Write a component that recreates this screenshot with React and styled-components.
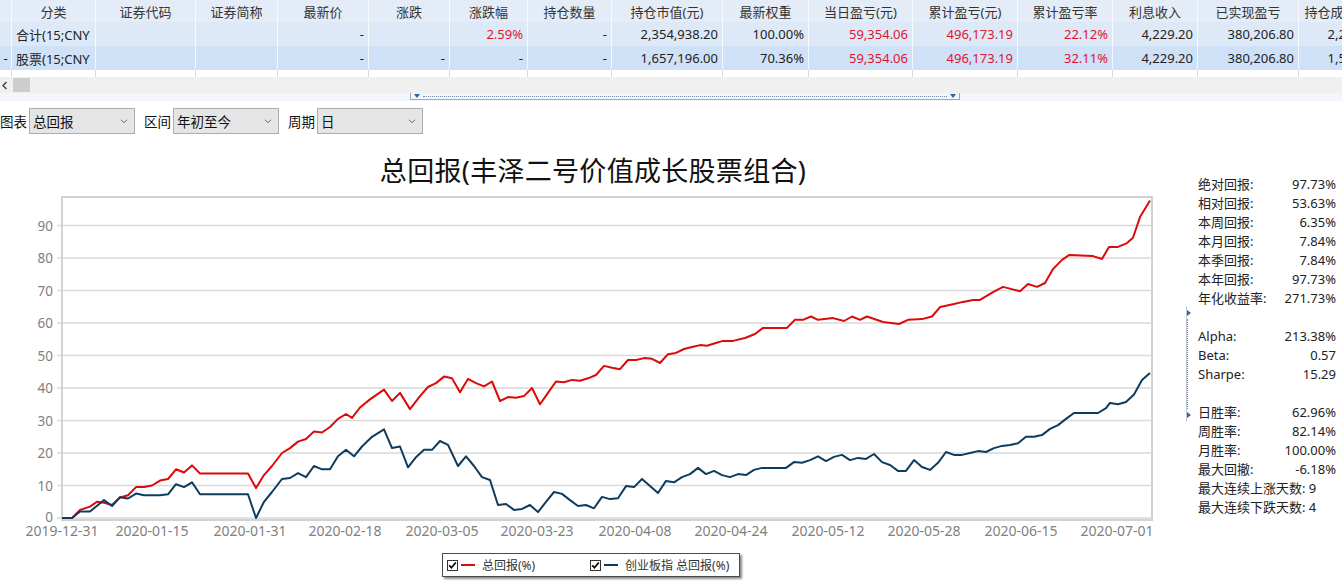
import React from 'react';
import styled, { createGlobalStyle } from 'styled-components';

const GlobalStyle = createGlobalStyle`
  html, body {
    margin: 0;
    padding: 0;
    background: #fff;
  }
  body {
    font-family: "Noto Sans", "Noto Sans CJK SC", sans-serif;
    color: #222;
    overflow: hidden;
  }
`;

const Page = styled.div`
  width: 1342px;
  height: 584px;
  display: flex;
  flex-direction: column;
  overflow: hidden;
`;

/* ---------- grid ---------- */

const GridWrap = styled.div`
  height: 77px;
  overflow: hidden;
  flex-shrink: 0;
`;

const Row = styled.div`
  display: flex;
  width: max-content;
  height: ${p => (p.$header ? 22 : 24)}px;
  background: ${p => p.$bg};
  white-space: nowrap;
`;

const Cell = styled.div`
  flex: 0 0 ${p => p.$w}px;
  box-sizing: border-box;
  padding: 0 4px;
  display: flex;
  align-items: center;
  justify-content: ${p =>
    p.$align === 'left' ? 'flex-start' : p.$align === 'center' ? 'center' : 'flex-end'};
  font-size: 13px;
  color: ${p => (p.$red ? '#e0142c' : p.$header ? '#333' : '#222')};
  border-right: 1px solid ${p => (p.$plain ? '#d9d9d9' : 'rgba(255,255,255,0.75)')};
  overflow: hidden;
`;

const HScroll = styled.div`
  height: 16px;
  background: #f0f0f0;
  display: flex;
  align-items: center;
  gap: 4px;
  padding-left: 1px;
  flex-shrink: 0;
`;

const Thumb = styled.div`
  width: 17px;
  height: 14px;
  background: #cdcdcd;
`;

const HSplit = styled.div`
  height: 8px;
  background: #f3f6fa;
  display: flex;
  align-items: flex-start;
  padding-left: 410px;
  flex-shrink: 0;
`;

const HHandle = styled.div`
  width: 550px;
  height: 7px;
  box-sizing: border-box;
  border: 1px solid #9aa8ba;
  border-top: none;
  display: flex;
  align-items: center;
  gap: 3px;
  padding: 0 3px;
`;

const DownTri = styled.div`
  width: 0;
  height: 0;
  border-left: 3px solid transparent;
  border-right: 3px solid transparent;
  border-top: 4px solid #2d62a8;
`;

const DotLine = styled.div`
  flex: 1;
  border-top: 1px dotted #6c86aa;
`;

/* ---------- toolbar ---------- */

const Toolbar = styled.div`
  height: 40px;
  display: flex;
  align-items: center;
  flex-shrink: 0;
`;

const Field = styled.div`
  display: flex;
  align-items: center;
  gap: 2px;
  margin-right: 9px;
`;

const Label = styled.span`
  font-size: 13.5px;
  color: #111;
`;

const Select = styled.div`
  width: 106px;
  height: 26px;
  box-sizing: border-box;
  background: #e5e5e5;
  border: 1px solid #adadad;
  display: flex;
  align-items: center;
  justify-content: space-between;
  padding: 0 6px 0 3px;
  font-size: 13.5px;
  color: #111;
`;

/* ---------- body ---------- */

const Main = styled.div`
  flex: 1;
  display: flex;
  min-height: 0;
`;

const ChartPane = styled.div`
  width: 1186px;
  flex-shrink: 0;
  display: flex;
  flex-direction: column;
  align-items: center;
`;

const Title = styled.div`
  margin-top: 14px;
  font-size: 27px;
  line-height: 32px;
  color: #111;
  letter-spacing: 0.3px;
`;

const ChartSvg = styled.svg`
  display: block;
  align-self: flex-start;
  margin-top: 3px;
`;

const Legend = styled.div`
  margin-top: 8px;
  margin-left: -4px;
  width: 298px;
  height: 24px;
  box-sizing: border-box;
  border: 1px solid #4a4a4a;
  box-shadow: 2px 2px 2px rgba(0, 0, 0, 0.45);
  display: flex;
  align-items: center;
  padding-left: 4px;
  background: #fff;
`;

const LegendItem = styled.div`
  width: 143px;
  display: flex;
  align-items: center;
  font-size: 12px;
  color: #333;
`;

const Check = styled.span`
  width: 11px;
  height: 11px;
  box-sizing: border-box;
  border: 1px solid #333;
  display: inline-flex;
  align-items: center;
  justify-content: center;
  margin-right: 3px;
`;

const Swatch = styled.span`
  width: 14px;
  height: 2px;
  background: ${p => p.$color};
  margin-right: 7px;
`;

const VSplit = styled.div`
  align-self: center;
  width: 4px;
  height: 116px;
  box-sizing: border-box;
  border-left: 1px solid #c3ccd8;
  display: flex;
  flex-direction: column;
  align-items: flex-start;
  justify-content: space-between;
  padding: 4px 0;
  margin-top: 2px;
`;

const RightTri = styled.div`
  width: 0;
  height: 0;
  border-top: 3px solid transparent;
  border-bottom: 3px solid transparent;
  border-left: 4px solid #2d62a8;
`;

const VDots = styled.div`
  flex: 1;
  margin: 3px 0;
  border-left: 1px dotted #6c86aa;
`;

const Stats = styled.div`
  flex: 1;
  padding: 33px 6px 0 8px;
  display: flex;
  flex-direction: column;
`;

const StatRow = styled.div`
  height: 19px;
  display: flex;
  align-items: center;
  justify-content: space-between;
  font-size: 13px;
  color: #222;
  white-space: nowrap;
`;

/* ---------- data ---------- */

const columns = [
  { title: '', w: 12, align: 'center' },
  { title: '分类', w: 84, align: 'left' },
  { title: '证券代码', w: 100, align: 'left' },
  { title: '证券简称', w: 82, align: 'left' },
  { title: '最新价', w: 91 },
  { title: '涨跌', w: 81 },
  { title: '涨跌幅', w: 78 },
  { title: '持仓数量', w: 84 },
  { title: '持仓市值(元)', w: 111 },
  { title: '最新权重', w: 86 },
  { title: '当日盈亏(元)', w: 104 },
  { title: '累计盈亏(元)', w: 105 },
  { title: '累计盈亏率', w: 95 },
  { title: '利息收入', w: 85 },
  { title: '已实现盈亏', w: 101 },
  { title: '持仓成本价格(元)', w: 111 },
];

const R = s => ({ v: s, red: true });

const rows = [
  {
    bg: '#dee9f7',
    cells: ['', '合计(15;CNY', '', '', '-', '', R('2.59%'), '-', '2,354,938.20', '100.00%',
      R('59,354.06'), R('496,173.19'), R('22.12%'), '4,229.20', '380,206.80', '2,259,731.40'],
  },
  {
    bg: '#cfe1f7',
    cells: ['-', '股票(15;CNY', '', '', '-', '-', '-', '-', '1,657,196.00', '70.36%',
      R('59,354.06'), R('496,173.19'), R('32.11%'), '4,229.20', '380,206.80', '1,562,018.40'],
  },
  {
    bg: '#fff',
    plain: true,
    cells: ['', '', '', '', '', '', '', '', '', '', '', '', '', '', '', ''],
  },
];

const red = [
  [62, 0], [72, 0], [80, 2.5], [90, 3.5], [97, 5], [104, 4.7], [112, 4], [120, 6.3], [128, 7],
  [136, 9.5], [144, 9.5], [152, 10], [160, 11.5], [168, 12], [176, 15], [184, 14], [192, 16.2],
  [200, 13.7], [248, 13.7], [256, 9.2], [264, 13.2], [272, 16], [282, 20], [290, 21.5],
  [298, 23.5], [306, 24.3], [314, 26.6], [322, 26.3], [330, 28], [338, 30.5], [346, 32],
  [352, 30.8], [360, 34], [370, 36.5], [384, 39.5], [392, 36], [400, 38.5], [410, 33.5],
  [420, 37.5], [428, 40.3], [436, 41.5], [444, 43.5], [452, 43], [460, 38.7], [468, 42.8],
  [476, 41.5], [484, 40.5], [492, 42], [500, 36], [508, 37.2], [516, 37], [524, 37.5],
  [532, 40], [540, 35], [548, 38.5], [556, 42], [564, 41.8], [572, 42.5], [580, 42.2],
  [588, 43], [596, 44], [604, 46.8], [612, 46.2], [620, 45.8], [628, 48.6], [636, 48.6],
  [644, 49.2], [652, 49], [660, 47.7], [668, 50.4], [676, 50.8], [684, 52], [692, 52.6],
  [700, 53.2], [707, 53], [715, 53.8], [723, 54.5], [733, 54.5], [745, 55.4], [755, 56.6],
  [763, 58.5], [787, 58.5], [795, 61], [803, 61], [811, 62], [818, 61], [833, 61.5],
  [844, 60.6], [852, 62], [860, 61], [867, 62], [883, 60.3], [899, 59.7], [908, 61],
  [922, 61.2], [932, 62], [940, 64.9], [953, 65.8], [963, 66.5], [973, 67.1], [980, 67.1],
  [993, 69.5], [1003, 71.1], [1020, 69.8], [1028, 72], [1037, 71.1], [1045, 72.3],
  [1053, 76.6], [1062, 79.4], [1069, 80.9], [1093, 80.6], [1102, 79.7], [1109, 83.4],
  [1118, 83.4], [1127, 84.6], [1133, 86.2], [1140, 92.6], [1150, 97.73],
];

const blue = [
  [62, 0], [72, 0], [80, 2], [90, 2], [98, 4], [104, 5.5], [112, 3.7], [120, 6.4], [128, 6],
  [136, 7.5], [144, 7], [160, 7], [168, 7.3], [176, 10.4], [184, 9.5], [192, 11], [200, 7.3],
  [248, 7.3], [256, 0], [264, 5], [272, 8], [282, 12], [290, 12.3], [298, 13.8], [306, 12.6],
  [314, 16], [322, 15], [330, 15], [338, 19], [346, 21], [354, 19], [362, 22], [372, 25],
  [384, 27.3], [392, 21.5], [400, 22], [408, 15.6], [416, 18.7], [424, 21], [432, 21],
  [440, 23.7], [448, 22.5], [458, 16], [466, 19], [474, 16], [482, 12.6], [490, 11.7],
  [498, 4], [506, 4.3], [514, 2.5], [522, 2.8], [530, 4], [538, 1.8], [546, 5], [554, 8],
  [562, 7.4], [570, 5.5], [578, 3.7], [586, 4], [594, 3], [602, 6.5], [610, 5.8], [618, 6.1],
  [626, 9.8], [634, 9.5], [642, 12], [650, 9.8], [658, 7.7], [666, 11.4], [674, 11],
  [682, 12.6], [690, 13.5], [698, 15.4], [706, 13.5], [714, 14.5], [722, 13.2], [730, 12.6],
  [738, 13.5], [746, 13.2], [754, 14.8], [762, 15.4], [786, 15.4], [794, 17.2], [802, 17],
  [810, 17.8], [818, 19], [826, 17.5], [834, 18.8], [842, 19.4], [850, 17.8], [858, 18.5],
  [866, 18.2], [874, 19.7], [882, 17.2], [890, 16.3], [898, 14.5], [906, 14.5], [914, 17.8],
  [922, 15.7], [930, 14.8], [938, 17], [946, 20.3], [954, 19.4], [962, 19.4], [970, 20],
  [978, 20.6], [986, 20.3], [994, 21.5], [1002, 22.2], [1010, 22.5], [1018, 23], [1026, 25],
  [1034, 25], [1042, 25.5], [1050, 27.4], [1058, 28.6], [1066, 30.5], [1074, 32.3],
  [1098, 32.3], [1106, 33.8], [1110, 35.4], [1118, 35], [1126, 35.7], [1134, 38],
  [1142, 42.5], [1150, 44.6],
];

const xTicks = [
  [62, '2019-12-31'], [152, '2020-01-15'], [250, '2020-01-31'], [345, '2020-02-18'],
  [442, '2020-03-05'], [537, '2020-03-23'], [635, '2020-04-08'], [731, '2020-04-24'],
  [828, '2020-05-12'], [924, '2020-05-28'], [1021, '2020-06-15'], [1117, '2020-07-01'],
];

const stats = [
  ['绝对回报:', '97.73%'], ['相对回报:', '53.63%'], ['本周回报:', '6.35%'], ['本月回报:', '7.84%'],
  ['本季回报:', '7.84%'], ['本年回报:', '97.73%'], ['年化收益率:', '271.73%'], null,
  ['Alpha:', '213.38%'], ['Beta:', '0.57'], ['Sharpe:', '15.29'], null,
  ['日胜率:', '62.96%'], ['周胜率:', '82.14%'], ['月胜率:', '100.00%'], ['最大回撤:', '-6.18%'],
  ['最大连续上涨天数: 9'], ['最大连续下跌天数: 4'],
];

/* ---------- chart ---------- */

const PLOT = { left: 62, right: 1152, top: 7, bottom: 330, zero: 328, unit: 3.25 };
const yOf = v => PLOT.zero - v * PLOT.unit;
const toPoints = data => data.map(([x, v]) => `${x},${yOf(v).toFixed(1)}`).join(' ');

const ReturnChart = () => (
  <ChartSvg width="1186" height="355" viewBox="0 0 1186 355">
    {[0, 10, 20, 30, 40, 50, 60, 70, 80, 90].map(v => (
      <g key={v}>
        <line x1="57" x2={PLOT.right} y1={yOf(v)} y2={yOf(v)} stroke="#d9d9d9" strokeWidth="1.6" />
        <text
          x="53"
          y={yOf(v) + (v === 0 ? 4 : 5)}
          textAnchor="end"
          fontSize="13.5"
          fill="#7f7f7f"
          fontFamily='"Noto Sans", sans-serif'
        >
          {v}
        </text>
      </g>
    ))}
    <rect
      x={PLOT.left}
      y={PLOT.top}
      width={PLOT.right - PLOT.left}
      height={PLOT.bottom - PLOT.top}
      fill="none"
      stroke="#d2d2d2"
      strokeWidth="2"
    />
    {xTicks.map(([x, label]) => (
      <text
        key={label}
        x={x}
        y="346"
        textAnchor="middle"
        fontSize="14"
        fill="#7f7f7f"
        fontFamily='"Noto Sans", sans-serif'
      >
        {label}
      </text>
    ))}
    <polyline points={toPoints(red)} fill="none" stroke="#dc0a0a" strokeWidth="2" strokeLinejoin="round" />
    <polyline points={toPoints(blue)} fill="none" stroke="#0d3c5f" strokeWidth="2" strokeLinejoin="round" />
  </ChartSvg>
);

const Chevron = () => (
  <svg width="8" height="5" viewBox="0 0 8 5">
    <polyline points="1,0.8 4,3.8 7,0.8" fill="none" stroke="#666" strokeWidth="1" />
  </svg>
);

const Tick = () => (
  <svg width="9" height="9" viewBox="0 0 9 9">
    <polyline points="1.2,4.3 3.4,6.8 7.8,1.5" fill="none" stroke="#000" strokeWidth="1.7" />
  </svg>
);

const App = () => (
  <Page>
    <GlobalStyle />
    <GridWrap>
      <Row $header $bg="#e4ecf7">
        {columns.map((c, i) => (
          <Cell key={i} $w={c.w} $align="center" $header>
            {c.title}
          </Cell>
        ))}
      </Row>
      {rows.map((r, ri) => (
        <Row key={ri} $bg={r.bg}>
          {r.cells.map((cell, i) => {
            const val = typeof cell === 'string' ? cell : cell.v;
            return (
              <Cell key={i} $w={columns[i].w} $align={columns[i].align} $red={cell.red} $plain={r.plain}>
                {val}
              </Cell>
            );
          })}
        </Row>
      ))}
    </GridWrap>
    <HScroll>
      <svg width="8" height="9" viewBox="0 0 8 9">
        <polyline points="5.5,1 2,4.5 5.5,8" fill="none" stroke="#444" strokeWidth="1.4" />
      </svg>
      <Thumb />
    </HScroll>
    <HSplit>
      <HHandle>
        <DownTri />
        <DotLine />
        <DownTri />
      </HHandle>
    </HSplit>
    <Toolbar>
      <Field>
        <Label>图表</Label>
        <Select>
          总回报
          <Chevron />
        </Select>
      </Field>
      <Field>
        <Label>区间</Label>
        <Select>
          年初至今
          <Chevron />
        </Select>
      </Field>
      <Field>
        <Label>周期</Label>
        <Select>
          日
          <Chevron />
        </Select>
      </Field>
    </Toolbar>
    <Main>
      <ChartPane>
        <Title>总回报(丰泽二号价值成长股票组合)</Title>
        <ReturnChart />
        <Legend>
          <LegendItem>
            <Check>
              <Tick />
            </Check>
            <Swatch $color="#dc0a0a" />
            总回报(%)
          </LegendItem>
          <LegendItem>
            <Check>
              <Tick />
            </Check>
            <Swatch $color="#0d3c5f" />
            创业板指 总回报(%)
          </LegendItem>
        </Legend>
      </ChartPane>
      <VSplit>
        <RightTri />
        <VDots />
        <RightTri />
      </VSplit>
      <Stats>
        {stats.map((s, i) =>
          s === null ? (
            <StatRow key={i} />
          ) : (
            <StatRow key={i}>
              <span>{s[0]}</span>
              {s[1] && <span>{s[1]}</span>}
            </StatRow>
          )
        )}
      </Stats>
    </Main>
  </Page>
);

export default App;
